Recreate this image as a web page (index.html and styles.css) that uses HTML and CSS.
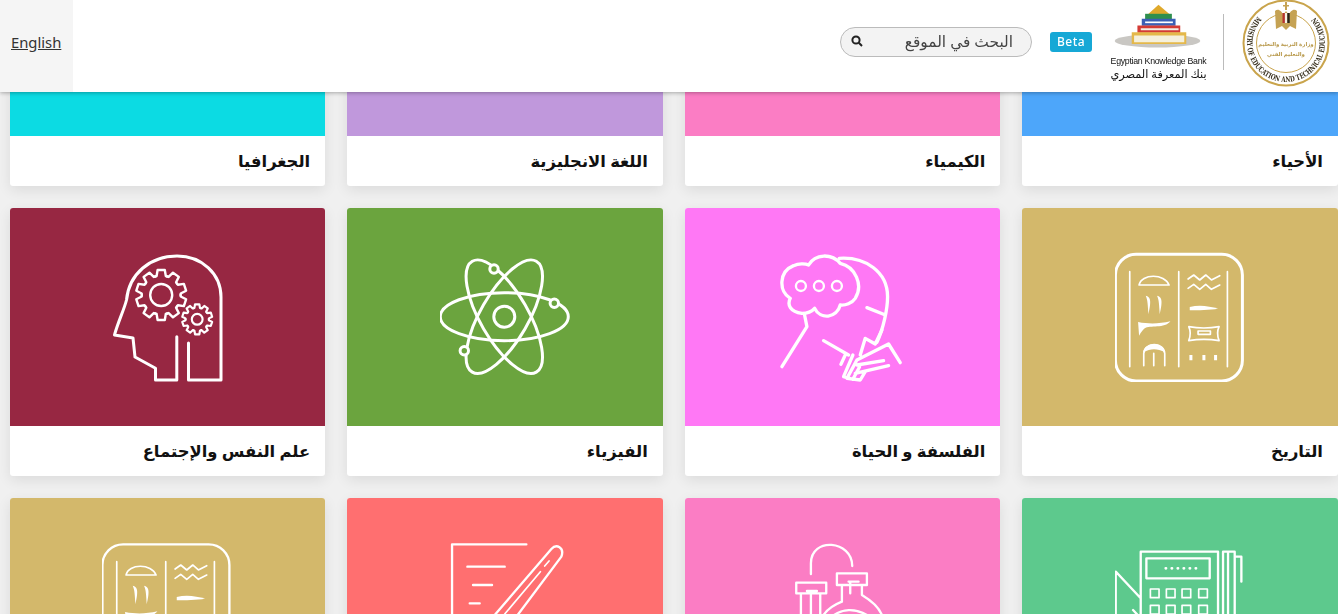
FILE: index.html
```html
<!DOCTYPE html>
<html lang="ar">
<head>
<meta charset="utf-8">
<title>بنك المعرفة المصري</title>
<link rel="stylesheet" href="styles.css">
</head>
<body>
<svg class="defs" width="0" height="0" aria-hidden="true">
  <defs>
    <g id="tooth"><path d="M-6,-18.5 L-4.6,-19 L-3.6,-25 L3.6,-25 L4.6,-19 L6,-18.5"/></g>
    <g id="gear">
      <use href="#tooth"/>
      <use href="#tooth" transform="rotate(36)"/>
      <use href="#tooth" transform="rotate(72)"/>
      <use href="#tooth" transform="rotate(108)"/>
      <use href="#tooth" transform="rotate(144)"/>
      <use href="#tooth" transform="rotate(180)"/>
      <use href="#tooth" transform="rotate(216)"/>
      <use href="#tooth" transform="rotate(252)"/>
      <use href="#tooth" transform="rotate(288)"/>
      <use href="#tooth" transform="rotate(324)"/>
    </g>
    <g id="hiero" transform="translate(-15.25,-7) scale(.3333)">
      <rect x="47" y="28" width="381" height="380" rx="62"/>
      <path class="hair" d="M90,80V365M237,80V365M383,80V365"/>
      <path class="hair" d="M118,120C125,85 195,85 208,120Z"/>
      <path class="solid" d="M138,152C152,156 156,165 146,208C144,180 144,165 138,152ZM172,152C186,156 190,165 180,208C178,180 178,165 172,152Z"/>
      <path class="hair" d="M265,102L282,90L300,105L318,90L335,105L360,92M265,130L282,118L300,133L318,118L335,133L360,120"/>
      <path class="solid" d="M270,186C300,178 330,184 355,191C330,195 295,196 270,196Z"/>
      <path class="solid" d="M115,231C150,238 180,236 212,229C195,252 150,240 135,250C128,256 124,262 118,272Z"/>
      <path class="hair" d="M132,362V325C135,292 190,292 195,325V362M162,325V362"/>
      <path class="solid" d="M130,322C135,288 192,288 197,322C170,310 155,310 130,322Z"/>
      <path class="hair" d="M267,245C295,250 330,250 358,245C352,258 352,272 358,287C330,282 295,282 267,287C273,272 273,258 267,245ZM295,258H332V268H295Z"/>
      <path class="solid" d="M269,330h9v16h-9ZM308,330h9v16h-9ZM343,330h9v16h-9Z"/>
    </g>
  </defs>
</svg>

<header class="topbar">
  <a class="lang" href="#">English</a>
  <div class="brand-row">
    <div class="search">
      <span class="search-text">البحث في الموقع</span>
      <svg class="search-icon" viewBox="0 0 12 12" width="12" height="12"><circle cx="5" cy="5" r="3.6"/><path d="M7.8,7.8L11,11"/></svg>
    </div>
    <span class="beta">Beta</span>
    <div class="ekb">
      <svg class="ekb-art" viewBox="240 15 290 140" width="97" height="47">
        <ellipse cx="382" cy="128" rx="128" ry="20" fill="#c9c7c3"/>
        <path d="M385,20L352,50H420Z" fill="#e0a92b"/>
        <path d="M345,47H425V65H345Z" fill="#2f8f4e"/>
        <path d="M335,62H436V83H335Z" fill="#3b5fb5"/>
        <path d="M345,70H428V75H345Z" fill="#fff"/>
        <path d="M322,82H450V104H322Z" fill="#d43b35"/>
        <path d="M332,90H445V96H332Z" fill="#f3efe6"/>
        <path d="M305,102H468V137H305Z" fill="#e4b84a"/>
        <path d="M312,112H462V132H312Z" fill="#f5f0dc"/>
      </svg>
      <span class="ekb-en">Egyptian Knowledge Bank</span>
      <span class="ekb-ar">بنك المعرفة المصري</span>
    </div>
    <span class="divider"></span>
    <svg class="ministry" viewBox="0 0 88 88" width="88" height="88">
      <circle class="ring" cx="44" cy="44" r="42.5"/>
      <circle class="ring-thin" cx="44" cy="44" r="29.5"/>
      <path id="ringpath" d="M15.5,17.4A39,39 0 1 0 72.5,17.4" fill="none"/>
      <text class="ring-text"><textPath href="#ringpath" textLength="180" lengthAdjust="spacingAndGlyphs">MINISTRY OF EDUCATION AND TECHNICAL EDUCATION</textPath></text>
      <path class="gold" d="M33,12C36,9 40,12 41,16L44,12L47,16C48,12 52,9 55,12L54,30L48,27L44,31L40,27L34,30Z"/>
      <path d="M40.5,14h2.4v10h-2.4Z" fill="#b8322f"/>
      <path d="M42.9,14h2.4v10h-2.4Z" fill="#f6f2e6"/>
      <path d="M45.3,14h2.4v10h-2.4Z" fill="#26221b"/>
      <path class="gold" d="M43,3h2v3h2v1.5h-2V11h-2V7.5h-2V6h2Z"/>
      <text class="seal" x="44" y="47">وزارة التربية والتعليم</text>
      <text class="seal" x="44" y="57">والتعليم الفني</text>
    </svg>
  </div>
</header>

<main class="grid">
  <article class="card">
    <div class="art cyan"><svg class="ic" viewBox="0 0 130 130"><path d="M42,130H98"/></svg></div>
    <h3 class="name">الجغرافيا</h3>
  </article>
  <article class="card">
    <div class="art purple"><svg class="ic" viewBox="0 0 130 130"><path d="M0,130H130"/></svg></div>
    <h3 class="name">اللغة الانجليزية</h3>
  </article>
  <article class="card">
    <div class="art pink"></div>
    <h3 class="name">الكيمياء</h3>
  </article>
  <article class="card">
    <div class="art blue"></div>
    <h3 class="name">الأحياء</h3>
  </article>

  <article class="card">
    <div class="art maroon">
      <svg class="ic" viewBox="0 0 130 130">
        <path d="M74.8,84.7V128H53.5V116.3L33,105L31,86L12.5,83C16,70 22,58 24.5,48C27,22 48,4 75,4C100,4 119,22 119,45V128H86.5V91"/>
        <g class="thin" transform="translate(59.2,43)"><use href="#gear"/><circle r="11"/></g>
        <g class="thin small" transform="translate(95.2,67.3) scale(.6)"><use href="#gear"/><circle r="9"/></g>
      </svg>
    </div>
    <h3 class="name">علم النفس والإجتماع</h3>
  </article>
  <article class="card">
    <div class="art green">
      <svg class="ic" viewBox="0 0 130 130">
        <g class="plain" transform="translate(64.3,64.7)">
          <ellipse rx="64" ry="24"/>
          <ellipse rx="64" ry="24" transform="rotate(60)"/>
          <ellipse rx="64" ry="24" transform="rotate(-60)"/>
          <circle r="10.5"/>
        </g>
        <circle class="electron" cx="54" cy="17" r="4.2"/>
        <circle class="electron" cx="114.3" cy="51.3" r="4.2"/>
        <circle class="electron" cx="24.3" cy="98.7" r="4.2"/>
      </svg>
    </div>
    <h3 class="name">الفيزياء</h3>
  </article>
  <article class="card">
    <div class="art magenta">
      <svg class="ic" viewBox="0 0 130 130">
        <g class="big" transform="translate(-12.75,-7) scale(.3333)">
          <path class="fat" d="M110,205C75,200 65,180 75,160C40,140 40,80 85,62C100,55 120,55 130,60C150,25 200,25 225,55C270,65 295,120 270,160C260,175 240,182 225,180C215,220 165,225 148,190C135,205 120,205 110,205Z"/>
          <path class="fat" d="M222,40C300,35 367,80 367,155C367,190 355,250 335,292M305,188L355,208M118,210L125,245L50,365"/>
          <circle class="mid" cx="107" cy="123" r="15"/>
          <circle class="mid" cx="161" cy="123" r="15"/>
          <circle class="mid" cx="215" cy="123" r="15"/>
        </g>
        <g class="big" transform="translate(32.25,78) scale(.3333)">
          <path class="fat" d="M40,32L115,75M105,75L92,103M150,75L165,25L195,42L215,0M270,98L235,42L140,90L110,145L150,150L165,125M128,75L100,140L128,148L148,110M140,105L220,92M135,130L235,107"/>
        </g>
      </svg>
    </div>
    <h3 class="name">الفلسفة و الحياة</h3>
  </article>
  <article class="card">
    <div class="art gold-bg"><svg class="ic" viewBox="0 0 130 130"><use class="glyph" href="#hiero"/></svg></div>
    <h3 class="name">التاريخ</h3>
  </article>

  <article class="card">
    <div class="art gold-bg"><svg class="ic lite" viewBox="0 0 130 130"><use class="glyph" href="#hiero"/></svg></div>
    <div class="name"></div>
  </article>
  <article class="card">
    <div class="art coral">
      <svg class="ic lite" viewBox="0 0 130 130">
        <g class="big" transform="translate(-350.25,-12) scale(.3333)">
          <path d="M1087,420V43H1310M1133,110H1245M1150,165H1207M1140,220H1170"/>
          <path d="M1215,255L1385,57C1400,40 1425,52 1415,80L1250,300"/>
          <path class="hair" d="M1245,252L1352,125M1365,108L1378,93"/>
        </g>
      </svg>
    </div>
    <div class="name"></div>
  </article>
  <article class="card">
    <div class="art pink">
      <svg class="ic lite" viewBox="0 0 130 130">
        <g class="big" transform="translate(2.25,-12) scale(.3333)">
          <path d="M92,132V100C92,20 216,30 216,108"/>
          <path d="M48,158H138V190H48ZM62,190V270M120,190V270M80,183H110M92,186V270"/>
          <path d="M170,130H260V165H170ZM185,165V215C160,225 140,240 130,255M245,165V195C270,210 295,230 305,255M205,155H235M210,158V190M155,260C185,235 225,235 260,255"/>
        </g>
      </svg>
    </div>
    <div class="name"></div>
  </article>
  <article class="card">
    <div class="art mint">
      <svg class="ic lite" viewBox="0 0 130 130">
        <g class="big" transform="translate(-335.25,-12) scale(.3333)">
          <path d="M1083,300V65H1315V300M1100,85H1290V145H1100ZM1330,300V65H1365V300M1345,65V300M1365,80H1385V155M1008,300V125L1083,205M1060,240L1083,265"/>
          <path class="dots" d="M1158,115H1265"/>
          <path class="hair" d="M1112,177H1138V203H1112ZM1160,177H1186V203H1160ZM1207,177H1233V203H1207ZM1257,177H1283V203H1257ZM1112,226H1138V252H1112ZM1160,226H1186V252H1160ZM1207,226H1233V252H1207ZM1257,226H1283V252H1257Z"/>
        </g>
      </svg>
    </div>
    <div class="name"></div>
  </article>
</main>
</body>
</html>
```
FILE: styles.css
```css
* { box-sizing: border-box; }
html, body { margin: 0; height: 100%; overflow: hidden; }
body {
  background: #f0f0f0;
  font-family: "Noto Sans", "DejaVu Sans", sans-serif;
  color: #111;
}
.defs { position: absolute; }

.topbar {
  position: fixed;
  top: 0; left: 0; right: 0;
  height: 92px;
  z-index: 5;
  background: #fff;
  box-shadow: 0 1px 4px rgba(0,0,0,.3);
  display: flex;
  justify-content: space-between;
}
.lang {
  width: 73px;
  background: #f5f5f5;
  color: #333;
  font-size: 14.8px;
  line-height: 20px;
  padding: 32px 0 0 11px;
  text-decoration: underline;
}
.brand-row {
  display: flex;
  align-items: center;
  padding-right: 8px;
}
.search {
  width: 192px;
  height: 30px;
  margin: 0 18px 8px 0;
  border: 1px solid #bbb;
  border-radius: 15px;
  background: #f3f3f3;
  display: flex;
  align-items: center;
  justify-content: space-between;
  flex-direction: row-reverse;
  padding: 0 18px 0 10px;
}
.search-text { font-size: 15.4px; color: #444; direction: rtl; margin-top: -1px; }
.search-icon { fill: none; stroke: #222; stroke-width: 2; margin-bottom: 3px; }
.beta {
  width: 42px;
  height: 20px;
  margin: 0 18px 8px 0;
  background: #16a8d6;
  border-radius: 3px;
  color: #fff;
  font-size: 12px;
  font-weight: 500;
  line-height: 20px;
  text-align: center;
  letter-spacing: .5px;
}
.ekb {
  width: 97px;
  margin: 0 16px 0 0;
  display: flex;
  flex-direction: column;
  align-items: center;
  padding-bottom: 10px;
}
.ekb-art { display: block; }
.ekb-en {
  font-family: "Liberation Sans Narrow", "Liberation Sans", sans-serif;
  font-size: 8.8px;
  line-height: 11px;
  margin-top: 6px;
  white-space: nowrap;
  letter-spacing: -.3px;
  color: #111;
}
.ekb-ar { font-size: 11.3px; line-height: 13px; direction: rtl; color: #111; white-space: nowrap; }
.divider { width: 1px; height: 56px; background: #bbb; margin: 0 18px 8px 0; }
.ministry { margin: 0 0 7px 0; }
.ring { fill: #fff; stroke: #c9a44c; stroke-width: 2; }
.ring-thin { fill: none; stroke: #c9a44c; stroke-width: 1; }
.ring-text {
  font-family: "DejaVu Serif", serif;
  font-size: 7.6px;
  font-weight: 700;
  fill: #3a3220;
}
.gold { fill: #c5a253; }
.seal {
  font-size: 5.4px;
  fill: #b99a4d;
  text-anchor: middle;
  font-weight: 700;
}

.grid {
  display: grid;
  grid-template-columns: repeat(4, 1fr);
  gap: 22px;
  margin: -82px 0 0 9.6px;
}
.card {
  height: 268px;
  background: #fff;
  border-radius: 3px;
  overflow: hidden;
  box-shadow: 0 4px 14px rgba(0,0,0,.09);
  display: flex;
  flex-direction: column;
}
.art {
  height: 218px;
  display: flex;
  align-items: center;
  justify-content: center;
}
.name {
  margin: 0;
  height: 50px;
  padding: 0 15px;
  font-size: 16.4px;
  font-weight: 700;
  line-height: 50px;
  color: #111;
  direction: rtl;
}

.cyan { background: #0cdbe3; }
.purple { background: #c098dc; }
.pink { background: #fb7dc4; }
.blue { background: #4da6fa; }
.maroon { background: #972742; }
.green { background: #6ba43e; }
.magenta { background: #ff78f5; }
.gold-bg { background: #d3b86b; }
.coral { background: #ff6f70; }
.mint { background: #5dc98d; }

.ic {
  width: 130px;
  height: 130px;
  fill: none;
  stroke: #fff;
  stroke-width: 3;
  stroke-linecap: round;
  stroke-linejoin: round;
}
.ic .plain { stroke-width: 3; }
.ic .thin { stroke-width: 2.4; }
.ic .small { stroke-width: 3.6; }
.ic .big, .ic .glyph { stroke-width: 9; }
.ic.lite .big, .ic.lite .glyph { stroke-width: 7; }
.fat { stroke-width: 10; }
.mid { stroke-width: 7; }
.hair { stroke-width: 5; }
.solid { fill: #fff; stroke: none; }
.electron { fill: #6ba43e; }
.dots { stroke-dasharray: 1 17; stroke-width: 8; }
```
